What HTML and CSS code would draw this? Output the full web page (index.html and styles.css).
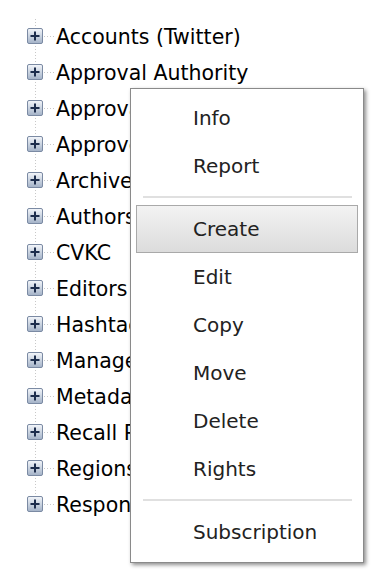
FILE: index.html
```html
<!DOCTYPE html>
<html lang="en">
<head>
    <meta charset="UTF-8">
    <title>Folders</title>
    <link rel="stylesheet" href="styles.css">
</head>
<body>
    <svg width="0" height="0" class="defs">
        <defs>
            <linearGradient id="boxFill" x1="0" y1="0" x2="0" y2="1">
                <stop offset="0" stop-color="#f4f7fb"/>
                <stop offset="1" stop-color="#a3b2c7"/>
            </linearGradient>
            <g id="plus">
                <rect x="0.5" y="9.5" width="15" height="15" rx="1.5" fill="url(#boxFill)" stroke="#7b8aa3"/>
                <path d="M3.5 17h9M8 12.5v9" stroke="#1d2d4c" stroke-width="2"/>
            </g>
        </defs>
    </svg>

    <ul class="tree">
        <li class="node first"><svg class="ico" width="29" height="36"><use href="#plus"/></svg><span>Accounts (Twitter)</span></li>
        <li class="node"><svg class="ico" width="29" height="36"><use href="#plus"/></svg><span>Approval Authority</span></li>
        <li class="node"><svg class="ico" width="29" height="36"><use href="#plus"/></svg><span>Approval Workflow</span></li>
        <li class="node"><svg class="ico" width="29" height="36"><use href="#plus"/></svg><span>Approvers</span></li>
        <li class="node"><svg class="ico" width="29" height="36"><use href="#plus"/></svg><span>Archives</span></li>
        <li class="node"><svg class="ico" width="29" height="36"><use href="#plus"/></svg><span>Authors</span></li>
        <li class="node"><svg class="ico" width="29" height="36"><use href="#plus"/></svg><span>CVKC</span></li>
        <li class="node"><svg class="ico" width="29" height="36"><use href="#plus"/></svg><span>Editors</span></li>
        <li class="node"><svg class="ico" width="29" height="36"><use href="#plus"/></svg><span>Hashtags</span></li>
        <li class="node"><svg class="ico" width="29" height="36"><use href="#plus"/></svg><span>Managers</span></li>
        <li class="node"><svg class="ico" width="29" height="36"><use href="#plus"/></svg><span>Metadata</span></li>
        <li class="node"><svg class="ico" width="29" height="36"><use href="#plus"/></svg><span>Recall Reasons</span></li>
        <li class="node"><svg class="ico" width="29" height="36"><use href="#plus"/></svg><span>Regions</span></li>
        <li class="node last"><svg class="ico" width="29" height="36"><use href="#plus"/></svg><span>Responsibilities</span></li>
    </ul>

    <div class="menu">
        <div class="item">Info</div>
        <div class="item">Report</div>
        <div class="sep"></div>
        <div class="item active">Create</div>
        <div class="item">Edit</div>
        <div class="item">Copy</div>
        <div class="item">Move</div>
        <div class="item">Delete</div>
        <div class="item">Rights</div>
        <div class="sep"></div>
        <div class="item">Subscription</div>
    </div>
</body>
</html>
```

FILE: styles.css
```css
* { margin: 0; padding: 0; box-sizing: border-box; }
body { font-family: 'DejaVu Sans', Verdana, sans-serif; background: #fff; color: #000; }
.defs { position: absolute; }

/* tree with dotted connector lines */
.tree { list-style: none; padding: 19px 0 0 27px; }
.node { display: flex; align-items: center; height: 36px; font-size: 20.5px; white-space: nowrap; }
.ico { flex: none; display: block;
    background-image: linear-gradient(to bottom, #c8c8c8 50%, transparent 50%), linear-gradient(to right, #c8c8c8 50%, transparent 50%);
    background-size: 1px 3px, 3px 1px;
    background-repeat: repeat-y, repeat-x;
    background-position: 8px 0, 17px 17px; }
.node.first .ico { background-position: 8px 18px, 17px 17px; }
.node.last .ico { background-size: 1px 18px, 3px 1px; background-image: repeating-linear-gradient(to bottom, #c8c8c8 0 1px, transparent 1px 3px), linear-gradient(to right, #c8c8c8 50%, transparent 50%); background-repeat: no-repeat, repeat-x; }

/* context menu */
.menu { position: absolute; left: 130px; top: 88px; width: 234px; height: 475px; background: #fff; border: 1px solid #8a8a8a; box-shadow: 2px 2px 4px rgba(0,0,0,0.45); padding-top: 5px; font-size: 20px; color: #222; }
.item { height: 48px; display: flex; align-items: center; padding-left: 62px; }
.item.active { margin: 0 5px; padding-left: 56px; border: 1px solid #a9a9a9; background: linear-gradient(#f3f3f3, #dcdcdc); }
.sep { height: 2px; background: #e0e0e0; margin: 6px 11px 7px 12px; }
```
